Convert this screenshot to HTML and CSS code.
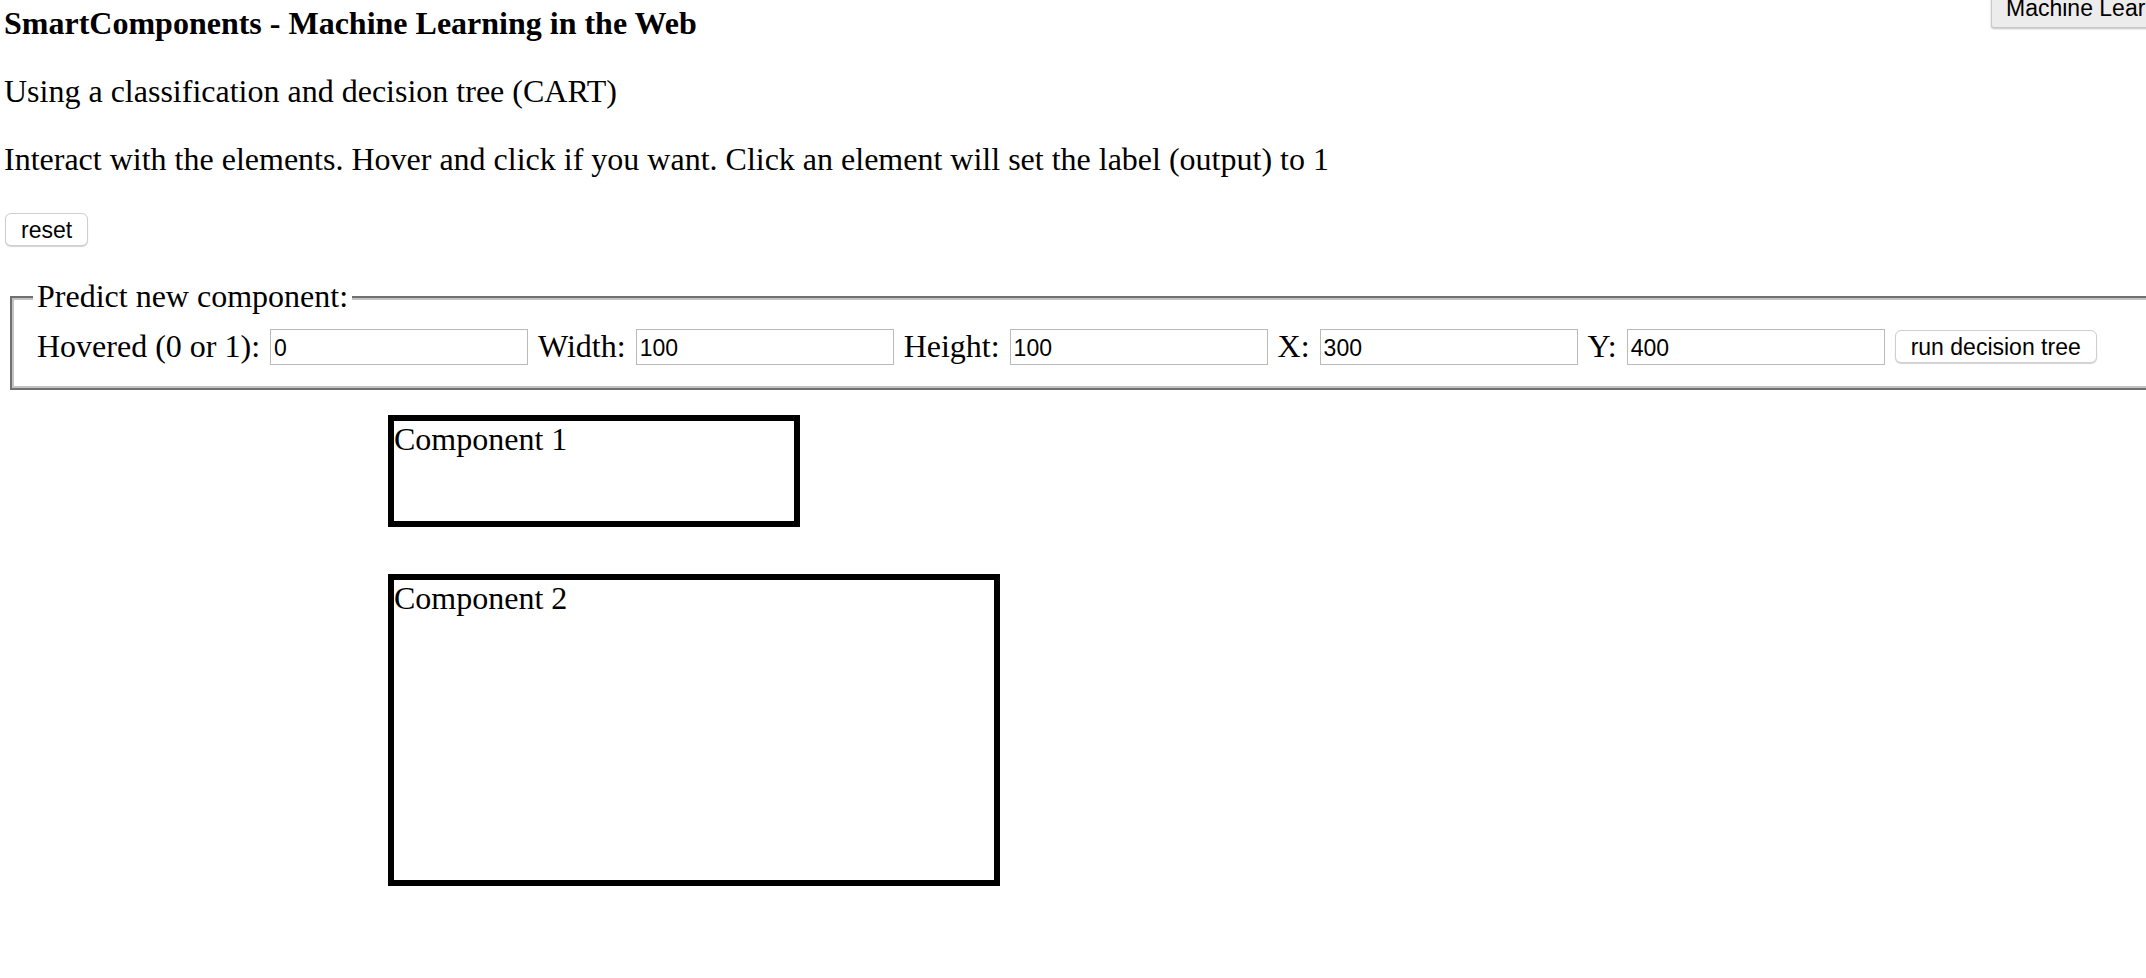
FILE: index.html
```html
<!DOCTYPE html>
<html lang="en">
<head>
    <meta charset="UTF-8">
    <meta name="viewport" content="width=device-width, initial-scale=1.0">
    <title>SmartComponents</title>
    <link rel="stylesheet" href="styles.css">
</head>
<body>
    <div class="page">
        <!-- floating toggle, half off screen -->
        <button class="ml-toggle">Machine Learning</button>

        <p class="title"><b>SmartComponents - Machine Learning in the Web</b></p>
        <p>Using a classification and decision tree (CART)</p>
        <p>Interact with the elements. Hover and click if you want. Click an element will set the label (output) to 1</p>

        <div class="actions">
            <button class="btn btn-reset">reset</button>
        </div>

        <!-- Prediction form -->
        <fieldset class="predict">
            <legend>Predict new component:</legend>
            <div class="predict-row">
                <label for="hovered">Hovered (0 or 1):</label>
                <input type="text" id="hovered" value="0">
                <label for="width">Width:</label>
                <input type="text" id="width" value="100">
                <label for="height">Height:</label>
                <input type="text" id="height" value="100">
                <label for="x">X:</label>
                <input type="text" id="x" value="300">
                <label for="y">Y:</label>
                <input type="text" id="y" value="400">
                <button class="btn">run decision tree</button>
            </div>
        </fieldset>

        <!-- Components -->
        <div class="components">
            <div class="component component-1">Component 1</div>
            <div class="component component-2">Component 2</div>
        </div>
    </div>
</body>
</html>
```

FILE: styles.css
```css
html, body {
    margin: 0;
    background-color: #ffffff;
}
body {
    font-family: "Liberation Serif", "Times New Roman", serif;
    font-size: 32px;
    color: #000000;
    overflow: hidden;
}
.page {
    position: relative;
    height: 973px;
    padding: 5px 0 0 4px;
    overflow: hidden;
}
p {
    margin: 31px 0;
}
.title {
    margin-top: 0;
    margin-bottom: 30px;
}
.ml-toggle {
    position: absolute;
    top: -12px;
    left: 1991px;
    height: 40px;
    padding: 0 14px;
    font-family: "Liberation Sans", Arial, sans-serif;
    font-size: 23px;
    color: #000000;
    white-space: nowrap;
    background-color: #ececec;
    border: 1px solid #c9c9c9;
    border-radius: 0 0 0 3px;
    box-shadow: 0 1px 2px rgba(0, 0, 0, 0.25);
}
.actions {
    display: flex;
    align-items: flex-end;
    height: 37px;
    margin: 31px 0 32px;
}
.btn {
    height: 33px;
    margin: 0;
    padding: 2px 15px 0;
    font-family: "Liberation Sans", Arial, sans-serif;
    font-size: 23px;
    color: #000000;
    background-color: #ffffff;
    border: 1px solid #cfcfcf;
    border-radius: 6px;
    box-shadow: 0 1px 1px rgba(0, 0, 0, 0.18);
    white-space: nowrap;
    flex-shrink: 0;
}
.btn-reset {
    margin-left: 1px;
}
.predict {
    margin: 0 -100px 0 6px;
    padding: 12px 24px 23px 25px;
    border: 2px solid #707070;
    box-shadow: inset 0 0 0 2px #c3c3c3;
    min-width: 0;
}
.predict legend {
    margin-left: -4px;
    padding: 0 4px;
    background-color: #ffffff;
}
.predict-row {
    display: flex;
    align-items: center;
    column-gap: 10px;
    height: 37px;
    margin-top: 1px;
}
.predict-row label {
    white-space: nowrap;
}
.predict-row input {
    box-sizing: border-box;
    width: 258px;
    height: 36px;
    margin: 0;
    padding: 3px 3px 0;
    font-family: "Liberation Sans", Arial, sans-serif;
    font-size: 23px;
    color: #000000;
    border: 1px solid #bababa;
    border-radius: 0;
    flex-shrink: 0;
}
.components {
    padding: 25px 0 0 384px;
}
.component {
    border: 6px solid #000000;
    margin-bottom: 47px;
}
.component-1 {
    width: 400px;
    height: 100px;
}
.component-2 {
    width: 600px;
    height: 300px;
}
```
